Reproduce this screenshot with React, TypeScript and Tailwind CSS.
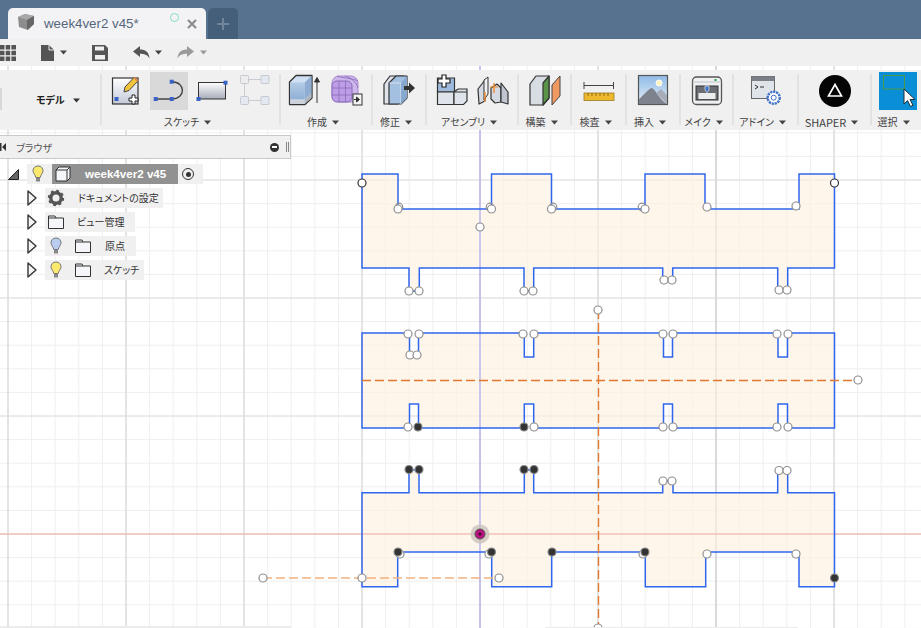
import type { ReactNode } from "react";

const jp = "font-['Noto_Sans_CJK_JP','Noto_Sans',sans-serif] [font-feature-settings:'palt']";

const majorX = [8, 126, 244, 362, 480, 598, 716, 834];
const majorY = [62, 180, 298, 416, 534];
const minorX = Array.from({ length: 40 }, (_, i) => 8 + i * 23.6);
const minorY = Array.from({ length: 25 }, (_, i) => 62 + i * 23.6);

const topShape =
  "M362 174H398V209H491.5V174H551.5V209H645V174H705V209H799V174H834.5V268H787.7V290.5H777.7V268H672.7V280H662.7V268H533.7V291H524V268H419.3V291H409V268H362Z";
const midShape =
  "M362 333H409.5V355H418.5V333H524.3V357H533.7V333H663.5V357H672.5V333H778V357H787.5V333H834.5V428H787.5V404H778V428H672.5V404H663.5V428H533.7V404H524.3V428H418.5V404H409.5V428H362Z";
const botShape =
  "M362 492.7H409V470H419V492.7H524.3V470H533.7V492.7H662.7V481H673V492.7H777.7V470H787.7V492.7H834.5V586.7H799V552H705.7V586.7H645.3V552H551.7V586.7H491.7V552H397.7V586.7H362Z";

// [x, y, kind] w = white point, d = dark point, k = fixed corner with dark ring, g = ghost
const points: [number, number, string][] = [
  [399, 207, "g"], [398, 209, "w"], [490, 207, "g"], [491.5, 209, "w"], [553, 207, "g"], [551.5, 209, "w"],
  [642, 207, "g"], [645, 209, "w"], [707, 207, "w"], [796, 206, "w"], [362, 183, "k"], [834.5, 183, "k"], [480, 227, "w"],
  [409, 291, "w"], [419, 291, "w"], [524, 291, "w"], [533, 291, "w"], [664, 280, "w"], [672, 280, "w"], [779, 290, "w"], [787, 290, "w"],
  [408, 334, "w"], [419, 334, "w"], [523, 334, "w"], [534, 334, "w"], [663, 334, "w"], [673, 334, "w"], [777, 334, "w"], [788, 334, "w"],
  [410, 355, "w"], [417, 355, "w"],
  [408, 427, "w"], [418, 427, "d"], [524, 427, "d"], [534, 427, "w"], [663, 427, "w"], [673, 427, "w"], [777, 427, "w"], [788, 427, "w"],
  [598, 310, "w"], [858, 380, "w"], [598, 628, "w"],
  [409, 469.5, "d"], [419, 469.5, "d"], [524, 469.5, "d"], [534, 469.5, "d"],
  [663, 481, "w"], [672, 481, "w"], [779, 470.5, "w"], [787, 470.5, "w"],
  [400, 554, "w"], [398, 552, "d"], [489, 554, "w"], [491.5, 552, "d"], [552, 552, "d"], [643, 554, "w"], [645, 552, "d"],
  [707, 554, "w"], [796, 554, "w"], [834.5, 578, "d"],
  [263, 578, "w"], [362, 578, "w"], [499, 578, "w"],
];

function SketchCanvas() {
  return (
    <svg className="absolute inset-0" width={921} height={628} viewBox="0 0 921 628">
      {minorX.map((x) => <line key={"vx" + x} x1={x} x2={x} y1={0} y2={628} stroke="#efefef" />)}
      {minorY.map((y) => <line key={"hy" + y} y1={y} y2={y} x1={0} x2={921} stroke="#efefef" />)}
      {majorX.map((x) => <line key={"mx" + x} x1={x} x2={x} y1={0} y2={628} stroke={x === 716 ? "#bdbdbd" : "#d0d0d0"} />)}
      {majorY.map((y) => <line key={"my" + y} y1={y} y2={y} x1={0} x2={921} stroke="#dedede" />)}

      <g fill="#fdf0e0" fillOpacity={0.65}>
        <path d={topShape} />
        <path d={midShape} />
        <path d={botShape} />
      </g>
      <line x1={0} x2={921} y1={534} y2={534} stroke="#f6aea6" strokeWidth={1.2} />
      <line x1={480} x2={480} y1={0} y2={628} stroke="#a8a8f6" strokeWidth={1.1} />
      <g fill="none" stroke="#2f66ee" strokeWidth={1.5}>
        <path d={topShape} />
        <path d={midShape} />
        <path d={botShape} />
      </g>
      <line x1={362} x2={858} y1={380.5} y2={380.5} stroke="#df7a30" strokeWidth={1.3} strokeDasharray="9 4" />
      <line x1={598.5} x2={598.5} y1={310} y2={628} stroke="#df7a30" strokeWidth={1.4} strokeDasharray="9 4" />
      <line x1={263} x2={499} y1={578} y2={578} stroke="#efb17f" strokeWidth={1.6} strokeDasharray="9 4" />

      {points.map(([x, y, kind]) => (
        <circle
          key={`${x}-${y}`}
          cx={x}
          cy={y}
          r={kind === "g" ? 3.8 : 4}
          fill={kind === "d" ? "#333333" : kind === "g" ? "none" : "#ffffff"}
          stroke={kind === "k" ? "#333333" : kind === "d" ? "#8c8c8c" : "#8f8f8f"}
          strokeWidth={1.2}
        />
      ))}
      <circle cx={480} cy={534} r={9.5} fill="#c9c2bb" fillOpacity={0.8} />
      <circle cx={480} cy={534} r={5} fill="#b8127e" stroke="#555555" />
      <circle cx={480} cy={534} r={1.5} fill="#3a1030" />
    </svg>
  );
}

function Caret({ color = "#444444" }: { color?: string }) {
  return (
    <svg width={7} height={5} viewBox="0 0 7 5" className="shrink-0">
      <path d="M0 0.5H7L3.5 4.5Z" fill={color} />
    </svg>
  );
}

function Cell({ children, bg }: { children: ReactNode; bg?: string }) {
  return (
    <div className={`h-[38px] w-[38px] shrink-0 ${bg ?? ""}`}>
      <svg width={38} height={38} viewBox="0 0 38 38">{children}</svg>
    </div>
  );
}

function Handle({ x, y }: { x: number; y: number }) {
  return <rect x={x - 2} y={y - 2} width={4} height={4} fill="#3a63c8" />;
}

function Grad({ id, from, to }: { id: string; from: string; to: string }) {
  return (
    <defs>
      <linearGradient id={id} x1="0" y1="0" x2="0" y2="1">
        <stop offset="0" stopColor={from} />
        <stop offset="1" stopColor={to} />
      </linearGradient>
    </defs>
  );
}

const CreateSketchIcon = () => (
  <Cell>
    <Grad id="sk" from="#ffffff" to="#c3c9d8" />
    <rect x={5.5} y={6} width={25.5} height={26} fill="url(#sk)" stroke="#333333" strokeWidth={1.2} />
    <Handle x={9.5} y={27} />
    <path d="M18 15L27 5.5L31 9L22 18.5L17 20Z" fill="#f3c53c" stroke="#444444" />
    <path d="M27 5.5L31 9" stroke="#d9864a" strokeWidth={2} />
    <path d="M25 23h3v3h3v3h-3v3h-3v-3h-3v-3h3Z" fill="#ffffff" stroke="#222222" />
  </Cell>
);

const SplineIcon = () => (
  <Cell bg="bg-[#d9d9d9]">
    <path d="M5.7 27H21.7M21.7 9.7C36 9.7 36 27 21.7 27" fill="none" stroke="#444444" strokeWidth={1.4} />
    <Handle x={21.7} y={9.7} />
    <Handle x={5.7} y={27} />
    <Handle x={21.7} y={27} />
  </Cell>
);

const RectIcon = () => (
  <Cell>
    <Grad id="rc" from="#ffffff" to="#a6acba" />
    <rect x={5.5} y={10.5} width={27} height={16.5} fill="url(#rc)" stroke="#333333" />
    <Handle x={5.5} y={27} />
    <Handle x={32.5} y={10.7} />
  </Cell>
);

const ConstraintIcon = () => (
  <Cell>
    <path d="M12 7.5H25M8.5 12V24M12 28.5H25" stroke="#c9ccd2" fill="none" />
    <g fill="#e4e8f0" stroke="#c6c9d0">
      <rect x={4.5} y={3.5} width={8} height={8} rx={1} fill="#ededed" />
      <rect x={25} y={3.5} width={8} height={8} rx={1} />
      <rect x={4.5} y={24.5} width={8} height={8} rx={1} />
      <rect x={25} y={24.5} width={8} height={8} rx={1} />
    </g>
  </Cell>
);

const BoxIcon = () => (
  <Cell>
    <Grad id="bx" from="#b3cbe6" to="#8fb0d6" />
    <path d="M3.5 10L10 3.5H26V26L19 32.5H3.5Z" fill="#cfe0f2" stroke="#333333" strokeWidth={1.3} strokeLinejoin="round" />
    <rect x={4.2} y={10.5} width={14.5} height={17} fill="url(#bx)" />
    <path d="M4.2 27.5H18.7V32H4.2Z" fill="#cdd2da" />
    <path d="M18.7 10.5L25.4 4V21L18.7 27.5Z" fill="#8fadd2" />
    <path d="M18.7 27.5L25.4 21V26L18.7 32Z" fill="#b0b6c0" />
    <path d="M31 31V8M28.5 10L31 5.5L33.5 10Z" stroke="#333333" fill="#333333" />
  </Cell>
);

const FormIcon = () => (
  <Cell>
    <rect x={4} y={4} width={26} height={26} rx={7} fill="#cdb6ec" stroke="#a98ad2" />
    <rect x={4} y={9} width={20} height={21} rx={5} fill="#bd9ee6" stroke="#8a6ab8" />
    <path d="M11 9V30M17.5 9V30M4 16H24M4 23H24M9 4C13 6 24 6 30 9M17 4C20 5 28 8 30 16" stroke="#8a6ab8" strokeWidth={0.8} fill="none" />
    <rect x={25} y={22} width={9} height={11} fill="#f4f4f4" stroke="#333333" />
    <path d="M26 27.5H30M28.5 25L31.5 27.5L28.5 30Z" fill="#333333" stroke="#333333" />
  </Cell>
);

const PressPullIcon = () => (
  <Cell>
    <path d="M4 12L10 4H24L18 12V32H4Z" fill="#dfe3ea" stroke="#333333" strokeWidth={1.2} strokeLinejoin="round" />
    <path d="M9 32V11L16 4H27L27 26L21 32Z" fill="#a3c0e0" stroke="#333333" strokeWidth={1.2} strokeLinejoin="round" />
    <path d="M9.5 11H21V32" stroke="#d8e4f2" fill="none" />
    <path d="M21 11L27 4V26L21 32Z" fill="#87a8cf" />
    <path d="M24 14H29V10.5L35 16L29 21.5V18H24Z" fill="#333333" />
  </Cell>
);

const NewComponentIcon = () => (
  <Cell>
    <path d="M5.5 6H22.5V20H5.5Z" fill="#9ebbdd" stroke="#333333" strokeWidth={1.2} />
    <path d="M5.5 20H22V32.5H5.5Z" fill="#dfe4ea" stroke="#333333" strokeWidth={1.2} />
    <path d="M22 20L26 17H35V29L31.5 32.5H22Z" fill="#dfe4ea" stroke="#333333" strokeWidth={1.2} />
    <path d="M22.5 6V20H35" stroke="#333333" fill="none" />
    <path d="M10 3h4v4h4v4h-4v4h-4v-4H6V7h4Z" fill="#ffffff" stroke="#222222" strokeWidth={1.2} />
  </Cell>
);

const JointIcon = () => (
  <Cell>
    <path d="M3 17L10 8V29L4 32Z" fill="#d5dae2" stroke="#333333" strokeWidth={1.2} strokeLinejoin="round" />
    <path d="M9 8L13 5V22L9 28Z" fill="#eef0f4" stroke="#333333" />
    <path d="M16 16L22 12L26 16V30L20 31L16 27Z" fill="#d5dae2" stroke="#333333" strokeWidth={1.2} strokeLinejoin="round" />
    <path d="M26 11L33 20V32L26 30Z" fill="#c0c6d0" stroke="#333333" strokeWidth={1.2} strokeLinejoin="round" />
    <path d="M10 20V30M19 11V21" stroke="#ef8a2c" strokeWidth={1.4} />
    <path d="M15 15H23" stroke="#ef8a2c" />
  </Cell>
);

const PlaneIcon = () => (
  <Cell>
    <path d="M4 12L10 4H23V26L17 33H4Z" fill="#d8dce3" stroke="#333333" strokeWidth={1.2} strokeLinejoin="round" />
    <path d="M17 11L23 4V26L17 33Z" fill="#5a9448" stroke="#333333" strokeWidth={1.2} strokeLinejoin="round" />
    <path d="M26 13L34 4V24L26 33Z" fill="#ef9a63" stroke="#444444" strokeLinejoin="round" />
  </Cell>
);

const MeasureIcon = () => (
  <Cell>
    <path d="M4 10V17M4 13.5H33.5M33.5 10V17" stroke="#444444" fill="none" />
    <rect x={4} y={21} width={30} height={7.5} fill="#eeb92f" stroke="#9a7a20" strokeWidth={0.8} />
    <path d="M8 21V24M12 21V24M16 21V24M20 21V24M24 21V24M28 21V24" stroke="#7a5a10" strokeWidth={0.8} />
  </Cell>
);

const ImageIcon = () => (
  <Cell>
    <Grad id="sky" from="#8fbbe6" to="#e5eff8" />
    <rect x={4.5} y={3.5} width={29} height={29} fill="url(#sky)" stroke="#555555" strokeWidth={1.2} />
    <circle cx={25} cy={11} r={3} fill="#fff3c0" stroke="#ffffff" />
    <path d="M5 27C10 23 15 16 18 16C22 18 24 26 33 32H5Z" fill="#7d828c" />
    <path d="M22 21L27 17L33 23V32Z" fill="#a7adb8" />
  </Cell>
);

const MakeIcon = () => (
  <Cell>
    <rect x={4.5} y={5} width={29} height={27.5} rx={4} fill="#eff0f2" stroke="#555555" strokeWidth={1.3} />
    <path d="M4.5 10H33.5" stroke="#bfc2c8" />
    <rect x={8} y={14} width={22} height={14} fill="#6a6d74" stroke="#333333" />
    <rect x={26.5} y={7} width={2} height={2} fill="#27a04a" />
    <path d="M17 14H21V18L19 20.5L17 18Z" fill="#3f74c8" stroke="#ffffff" strokeWidth={0.6} />
    <rect x={10.5} y={21} width={17} height={6} fill="#eceded" />
  </Cell>
);

const AddinIcon = () => (
  <Cell>
    <rect x={4.5} y={4.5} width={23} height={22} fill="#dfe3ea" stroke="#666666" />
    <rect x={4.5} y={4.5} width={23} height={4.5} fill="#7b8088" />
    <path d="M8 13L11 15L8 17M13 15H17" stroke="#333333" fill="none" />
    <circle cx={26.7} cy={25.7} r={6} fill="#ffffff" stroke="#3e70c4" strokeWidth={2.4} strokeDasharray="2.2 0.8" />
    <circle cx={26.7} cy={25.7} r={2.5} fill="#ffffff" stroke="#3e70c4" />
  </Cell>
);

const ShaperIcon = () => (
  <Cell>
    <circle cx={19} cy={19} r={16} fill="#050505" />
    <path d="M19 12.5L25.5 24H12.5Z" fill="none" stroke="#ffffff" strokeWidth={1.7} />
  </Cell>
);

const SelectIcon = () => (
  <Cell bg="bg-[#0a8fd6]">
    <rect x={4.5} y={3.5} width={21} height={13.5} fill="none" stroke="#4b9a4a" />
    <path d="M25 17L25 32L28.5 28.5L31.5 34.5L34 33.3L31 27.5L36 27.5Z" fill="#ffffff" stroke="#1c2b38" />
  </Cell>
);

function Sep() {
  return <div className="mt-[2px] h-[51px] w-[2px] shrink-0 bg-[#e2e2e2]" />;
}

function Section({ w, label, gap, children, pl, latin }: { w: string; label: string; gap: string; children?: ReactNode; pl?: string; latin?: boolean }) {
  return (
    <div className={`flex shrink-0 flex-col ${w}`}>
      <div className={`flex h-[38px] justify-center ${gap} ${pl ?? ""}`}>{children}</div>
      <div className={`mt-[4px] flex h-[16px] items-center justify-center gap-[5px] pr-[6px] leading-none text-[#3f3f3f] ${latin ? "text-[11px]" : "text-[10px]"} ${jp}`}>
        <span className="whitespace-nowrap">{label}</span>
        <Caret />
      </div>
    </div>
  );
}

function Toolbar() {
  return (
    <div className="mt-[4px] flex h-[60px] items-start bg-[#f0f0f0] pt-[2px]">
      <div className="flex h-[38px] w-[100px] shrink-0 items-start">
        <div className="mt-[16px] h-[22px] w-[2px] bg-[#d8d8d8]" />
        <div className={`ml-[34px] mt-[23px] flex items-center gap-[8px] text-[10px] font-bold leading-none text-[#222222] ${jp}`}>
          <span>モデル</span>
          <Caret color="#333333" />
        </div>
      </div>
      <Sep />
      <Section w="w-[177px]" gap="gap-[5px]" label="スケッチ">
        <CreateSketchIcon />
        <SplineIcon />
        <RectIcon />
        <ConstraintIcon />
      </Section>
      <Sep />
      <Section w="w-[90px]" gap="gap-[4px]" label="作成">
        <BoxIcon />
        <FormIcon />
      </Section>
      <Sep />
      <Section w="w-[52px]" gap="" label="修正">
        <PressPullIcon />
      </Section>
      <Sep />
      <Section w="w-[90px]" gap="gap-[5px]" label="アセンブリ">
        <NewComponentIcon />
        <JointIcon />
      </Section>
      <Sep />
      <Section w="w-[51px]" gap="" label="構築">
        <PlaneIcon />
      </Section>
      <Sep />
      <Section w="w-[53px]" gap="" label="検査">
        <MeasureIcon />
      </Section>
      <Sep />
      <Section w="w-[52px]" gap="" label="挿入">
        <ImageIcon />
      </Section>
      <Sep />
      <Section w="w-[51px]" gap="" label="メイク">
        <MakeIcon />
      </Section>
      <Sep />
      <Section w="w-[63px]" gap="" label="アドイン">
        <AddinIcon />
      </Section>
      <Sep />
      <Section w="w-[71px]" gap="" latin label="SHAPER">
        <ShaperIcon />
      </Section>
      <Sep />
      <Section w="w-[49px]" gap="" pl="pl-[3px]" label="選択">
        <SelectIcon />
      </Section>
    </div>
  );
}

function Bulb({ color }: { color: string }) {
  return (
    <svg width={12} height={18} viewBox="0 0 12 18" className="shrink-0">
      <path d="M6 1C2.8 1 1 3.2 1 5.8C1 8.5 3.5 9.8 3.8 12.5H8.2C8.5 9.8 11 8.5 11 5.8C11 3.2 9.2 1 6 1Z" fill={color} stroke="#777777" />
      <rect x={4} y={13} width={4} height={3.5} fill="#888888" />
    </svg>
  );
}

function Folder() {
  return (
    <svg width={16} height={14} viewBox="0 0 16 14" className="shrink-0">
      <path d="M0.5 13.5V1H7L8 3H15.5V13.5Z" fill="#f4f6fa" stroke="#333333" />
      <path d="M0.5 3H8" stroke="#333333" fill="none" />
    </svg>
  );
}

function Expander() {
  return (
    <svg width={10} height={16} viewBox="0 0 10 16" className="shrink-0">
      <path d="M1 1L9 8L1 15Z" fill="#f4f4f4" stroke="#333333" strokeWidth={1.4} strokeLinejoin="round" />
    </svg>
  );
}

function TreeRow({ children, w }: { children: ReactNode; w: string }) {
  return (
    <div className="flex h-[20px] items-center pl-[27px]">
      <Expander />
      <div className={`ml-[8px] flex h-[20px] items-center bg-[#f0f0f0] text-[10px] leading-none text-[#333333] ${w} ${jp}`}>
        {children}
      </div>
    </div>
  );
}

function BrowserPanel() {
  return (
    <div className="mt-[5px] w-[291px]">
      <div className={`flex h-[24px] items-center border border-l-0 border-[#c9c9c9] bg-[#f0f0f0] text-[10px] text-[#555555] ${jp}`}>
        <svg width={6} height={8} viewBox="0 0 6 8" className="ml-[0px]">
          <path d="M0 0H1.5V8H0ZM6 0V8L2 4Z" fill="#333333" />
        </svg>
        <span className="ml-[10px] flex-1">ブラウザ</span>
        <div className="flex h-[9px] w-[9px] items-center justify-center rounded-full bg-[#333333]">
          <div className="h-[1.5px] w-[5px] bg-white" />
        </div>
        <div className="ml-[7px] mr-[1px] h-[10px] w-[3px] border-x border-[#888888]" />
      </div>
      <div className="mt-[5px] flex flex-col gap-[4px]">
        <div className="flex h-[20px] items-center pl-[8px]">
          <svg width={11} height={11} viewBox="0 0 11 11" className="shrink-0">
            <path d="M0.5 10.5L10.5 0.5V10.5Z" fill="#666666" stroke="#222222" />
          </svg>
          <div className="ml-[8px] flex h-[20px] w-[176px] items-center bg-[#f0f0f0]">
            <div className="ml-[5px]"><Bulb color="#fbe96e" /></div>
            <div className="ml-[8px] flex h-[20px] w-[126px] shrink-0 items-center bg-[#919191]">
              <svg width={16} height={16} viewBox="0 0 16 16" className="ml-[3px] shrink-0">
                <path d="M1 4L4 1H15V12L12 15H1ZM1 4H12V15M12 4L15 1" fill="#f4f6fa" stroke="#333333" />
              </svg>
              <span className="ml-[14px] whitespace-nowrap font-['Liberation_Sans',sans-serif] text-[11.6px] font-bold leading-none text-white">week4ver2 v45</span>
            </div>
            <div className="ml-[4px] flex h-[12px] w-[12px] items-center justify-center rounded-full border border-[#333333]">
              <div className="h-[5px] w-[5px] rounded-full bg-[#333333]" />
            </div>
          </div>
        </div>
        <TreeRow w="w-[118px]">
          <svg width={18} height={18} viewBox="0 0 18 18" className="ml-[2px] shrink-0">
            <circle cx={9} cy={9} r={5.2} fill="none" stroke="#555555" strokeWidth={3.4} />
            <circle cx={9} cy={9} r={7} fill="none" stroke="#555555" strokeWidth={2.4} strokeDasharray="2.75 2.75" />
          </svg>
          <span className="ml-[13px] whitespace-nowrap">ドキュメントの設定</span>
        </TreeRow>
        <TreeRow w="w-[90px]">
          <div className="ml-[3px]"><Folder /></div>
          <span className="ml-[13px] whitespace-nowrap">ビュー管理</span>
        </TreeRow>
        <TreeRow w="w-[91px]">
          <div className="ml-[5px]"><Bulb color="#b9cdf2" /></div>
          <div className="ml-[13px]"><Folder /></div>
          <span className="ml-[14px] whitespace-nowrap">原点</span>
        </TreeRow>
        <TreeRow w="w-[99px]">
          <div className="ml-[5px]"><Bulb color="#fbe96e" /></div>
          <div className="ml-[13px]"><Folder /></div>
          <span className="ml-[13px] whitespace-nowrap">スケッチ</span>
        </TreeRow>
      </div>
    </div>
  );
}

function TabBar() {
  return (
    <div className="flex h-[39px] items-end bg-[#56728f] pl-[8px]">
      <div className="relative flex h-[31px] w-[198px] items-center rounded-t-[5px] bg-[#f3f3f5]">
        <svg width={18} height={18} viewBox="0 0 18 18" className="mb-[3px] ml-[9px] shrink-0">
          <path d="M1 4L8 1L17 3V11L11 17L2 14Z" fill="#8c8c8c" />
          <path d="M1 4L10 7L17 3L8 1Z" fill="#a8a8a8" />
          <path d="M10 7V17L17 11V3Z" fill="#666666" />
        </svg>
        <span className="ml-[9px] whitespace-nowrap font-['Liberation_Sans',sans-serif] text-[13.3px] leading-none text-[#56677d]">week4ver2 v45*</span>
        <div className="absolute left-[162px] top-[5px] h-[9px] w-[9px] rounded-full border-[1.5px] border-[#86dcc8]" />
        <svg width={10} height={10} viewBox="0 0 10 10" className="absolute left-[179px] top-[11px]">
          <path d="M1 1L9 9M9 1L1 9" stroke="#8d8d8d" strokeWidth={2.2} />
        </svg>
      </div>
      <div className="ml-[2px] flex h-[31px] w-[30px] items-center justify-center rounded-t-[5px] bg-[#455f7b]">
        <svg width={12} height={12} viewBox="0 0 12 12">
          <path d="M6 0V12M0 6H12" stroke="#70849a" strokeWidth={2} />
        </svg>
      </div>
    </div>
  );
}

function QuickBar() {
  return (
    <div className="flex h-[27px] items-center bg-[#f0f0f0]">
      <svg width={16} height={16} viewBox="0 0 16 16" className="shrink-0">
        <path d="M0 0H4.5V4.5H0ZM5.7 0H10.2V4.5H5.7ZM11.4 0H16V4.5H11.4ZM0 5.7H4.5V10.2H0ZM5.7 5.7H10.2V10.2H5.7ZM11.4 5.7H16V10.2H11.4ZM0 11.4H4.5V16H0ZM5.7 11.4H10.2V16H5.7ZM11.4 11.4H16V16H11.4Z" fill="#555555" />
      </svg>
      <svg width={13} height={16} viewBox="0 0 13 16" className="ml-[25px] shrink-0">
        <path d="M0 0H8L13 5V16H0Z" fill="#555555" />
        <path d="M8 0V5H13" fill="none" stroke="#f0f0f0" />
      </svg>
      <div className="ml-[6px]"><Caret /></div>
      <svg width={16} height={16} viewBox="0 0 16 16" className="ml-[25px] shrink-0">
        <path d="M0 0H13L16 3V16H0Z" fill="#555555" />
        <rect x={3} y={1.5} width={9} height={4} fill="#f0f0f0" />
        <rect x={3} y={10} width={10} height={4.5} fill="#f0f0f0" />
      </svg>
      <svg width={17} height={13} viewBox="0 0 17 13" className="ml-[25px] shrink-0">
        <path d="M7 0V3.5C12 3.5 16 5.5 16.5 12.5C14.5 8.5 11 7.7 7 7.7V11L0 5.5Z" fill="#555555" />
      </svg>
      <div className="ml-[5px]"><Caret /></div>
      <svg width={17} height={13} viewBox="0 0 17 13" className="ml-[15px] shrink-0">
        <path d="M10 0V3.5C5 3.5 1 5.5 0.5 12.5C2.5 8.5 6 7.7 10 7.7V11L17 5.5Z" fill="#9a9a9a" />
      </svg>
      <div className="ml-[6px]"><Caret color="#9a9a9a" /></div>
    </div>
  );
}

export default function App() {
  return (
    <div className="relative h-[628px] w-[921px] overflow-hidden bg-white">
      <SketchCanvas />
      <div className="relative">
        <TabBar />
        <QuickBar />
        <Toolbar />
        <BrowserPanel />
      </div>
      {/* bottom nav bar peeks in at the very edge */}
      <div className="absolute bottom-0 left-0 h-[2px] w-[291px] bg-[#ececec]" />
      <div className="absolute bottom-0 left-[545px] h-[1px] w-[253px] bg-[#ececec]" />
    </div>
  );
}
